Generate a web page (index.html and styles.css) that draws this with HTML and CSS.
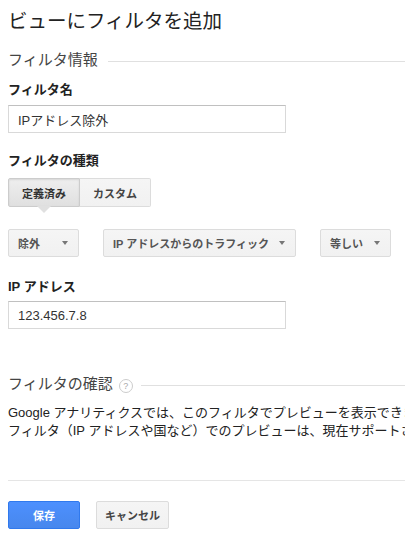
FILE: index.html
```html
<!DOCTYPE html>
<html lang="ja">
<head>
  <meta charset="UTF-8">
  <title>ビューにフィルタを追加</title>
  <link rel="stylesheet" href="styles.css">
</head>
<body>

  <h1 class="title">ビューにフィルタを追加</h1>

  <div class="section-head">
    <span>フィルタ情報</span>
    <span class="rule"></span>
  </div>

  <div class="field-label label-name">フィルタ名</div>
  <input class="text-input" type="text" value="IPアドレス除外">

  <div class="field-label label-type">フィルタの種類</div>
  <div class="segmented">
    <button class="seg-btn active">定義済み</button>
    <button class="seg-btn">カスタム</button>
  </div>

  <div class="dropdown-row">
    <div class="dropdown"><span>除外</span><span class="caret"></span></div>
    <div class="dropdown"><span>IP アドレスからのトラフィック</span><span class="caret"></span></div>
    <div class="dropdown"><span>等しい</span><span class="caret"></span></div>
  </div>

  <div class="field-label label-ip">IP アドレス</div>
  <input class="text-input input-ip" type="text" value="123.456.7.8">

  <div class="section-head verify-head">
    <span>フィルタの確認</span>
    <span class="help">?</span>
    <span class="rule"></span>
  </div>

  <p class="note">Google アナリティクスでは、このフィルタでプレビューを表示できません。<br>フィルタ（IP アドレスや国など）でのプレビューは、現在サポートされていません。</p>

  <div class="divider"></div>

  <div class="actions">
    <button class="btn btn-primary">保存</button>
    <button class="btn">キャンセル</button>
  </div>

</body>
</html>
```

FILE: styles.css
```css
html, body {
  overflow: hidden;
}
body {
  margin: 0;
  padding: 0 0 0 8px;
  background: #fff;
  color: #222;
  font-family: "Liberation Sans", "Noto Sans CJK JP", sans-serif;
  font-size: 13px;
}
.title {
  margin: 0;
  padding-top: 9px;
  font-size: 19.5px;
  line-height: 24px;
  font-weight: normal;
  color: #222;
}
.section-head {
  display: flex;
  align-items: center;
  margin-top: 17px;
  font-size: 15px;
  line-height: 20px;
  color: #444;
}
.section-head .rule {
  flex: 1;
  margin-left: 10px;
  border-top: 1px solid #e0e0e0;
  margin-top: 2px;
}
.help {
  display: inline-flex;
  align-items: center;
  justify-content: center;
  width: 12px;
  height: 12px;
  margin-left: 6px;
  margin-top: 4px;
  border: 1px solid #ccc;
  border-radius: 50%;
  font-size: 9px;
  line-height: 1;
  color: #aaa;
}
.verify-head {
  margin-top: 45px;
}
.verify-head .rule {
  margin-left: 8px;
}
.field-label {
  font-weight: bold;
  line-height: 18px;
  margin-top: 11px;
}
.label-type {
  margin-top: 19px;
}
.label-ip {
  margin-top: 21px;
}
.text-input {
  display: block;
  box-sizing: border-box;
  width: 278px;
  height: 28px;
  margin: 6px 0 0;
  padding: 0 9px;
  border: 1px solid #d9d9d9;
  border-top-color: #c0c0c0;
  font-family: inherit;
  font-size: 13px;
  color: #333;
}
.input-ip {
  margin-top: 5px;
}
.segmented {
  position: relative;
  display: flex;
  margin-top: 8px;
}
.seg-btn, .dropdown, .btn {
  box-sizing: border-box;
  height: 29px;
  border: 1px solid #dcdcdc;
  border-radius: 2px;
  background: linear-gradient(#f5f5f5, #f1f1f1);
  font-family: inherit;
  font-size: 11px;
  font-weight: bold;
  color: #444;
}
.seg-btn {
  width: 72px;
  padding: 0;
}
.seg-btn + .seg-btn {
  width: 71px;
  border-left: none;
  border-radius: 0 2px 2px 0;
}
.seg-btn.active {
  border-radius: 2px 0 0 2px;
  background: linear-gradient(#eee, #e0e0e0);
  border-color: #ccc;
  box-shadow: inset 0 1px 2px rgba(0, 0, 0, 0.1);
  color: #333;
}
.seg-btn.active::after {
  content: "";
  position: absolute;
  left: 29px;
  top: 28px;
  border-left: 7px solid transparent;
  border-right: 7px solid transparent;
  border-top: 7px solid #e0e0e0;
}
.dropdown-row {
  display: flex;
  gap: 24px;
  margin-top: 22px;
}
.dropdown {
  display: inline-flex;
  align-items: center;
  justify-content: space-between;
  min-width: 71px;
  height: 28px;
  padding: 0 10px 0 9px;
  color: #555;
}
.caret {
  margin-left: 10px;
  border-left: 3px solid transparent;
  border-right: 3px solid transparent;
  border-top: 4px solid #777;
}
.note {
  margin: 10px 0 0;
  line-height: 18px;
  white-space: nowrap;
  color: #222;
}
.divider {
  margin-top: 40px;
  border-top: 1px solid #e5e5e5;
}
.actions {
  display: flex;
  gap: 16px;
  margin-top: 20px;
}
.btn {
  min-width: 72px;
  height: 28px;
  padding: 0 8px;
}
.btn-primary {
  background: linear-gradient(#4d90fe, #4787ed);
  border-color: #3079ed;
  color: #fff;
}
```
